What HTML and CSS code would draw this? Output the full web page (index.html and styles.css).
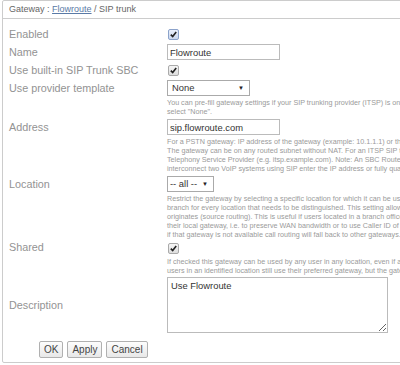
FILE: index.html
```html
<!DOCTYPE html>
<html>
<head>
    <title>Gateway - Flowroute</title>
    <link rel="stylesheet" href="styles.css">
</head>
<body>
    <div class="panel">
        <!-- Breadcrumb -->
        <div class="panel-head">Gateway : <a href="#">Flowroute</a> / SIP trunk</div>

        <form class="gw-form">
            <table class="fields">
                <tr class="row">
                    <td class="lbl">Enabled</td>
                    <td><span class="chk focused"><svg width="7" height="7" viewBox="0 0 7 7"><path d="M0.8 3.6 L2.7 5.6 L6.2 0.9" fill="none" stroke="#222" stroke-width="1.6"/></svg></span></td>
                </tr>
                <tr class="row">
                    <td class="lbl">Name</td>
                    <td><input type="text" class="txt" value="Flowroute"></td>
                </tr>
                <tr class="row">
                    <td class="lbl">Use built-in SIP Trunk SBC</td>
                    <td><span class="chk"><svg width="7" height="7" viewBox="0 0 7 7"><path d="M0.8 3.6 L2.7 5.6 L6.2 0.9" fill="none" stroke="#222" stroke-width="1.6"/></svg></span></td>
                </tr>
                <tr class="row">
                    <td class="lbl">Use provider template</td>
                    <td><div class="select sel-template"><span>None</span><span class="arrow">&#9660;</span></div></td>
                </tr>
                <tr>
                    <td></td>
                    <td class="help">You can pre-fill gateway settings if your SIP trunking provider (ITSP) is on the list, otherwise<br>select "None".</td>
                </tr>
                <tr class="row">
                    <td class="lbl">Address</td>
                    <td><input type="text" class="txt" value="sip.flowroute.com"></td>
                </tr>
                <tr>
                    <td></td>
                    <td class="help">For a PSTN gateway: IP address of the gateway (example: 10.1.1.1) or the hostname of the gateway.<br>The gateway can be on any routed subnet without NAT. For an ITSP SIP trunk: host name of the Internet<br>Telephony Service Provider (e.g. itsp.example.com). Note: An SBC Router is required. For a SIP trunk to<br>interconnect two VoIP systems using SIP enter the IP address or fully qualified host name of the other system.</td>
                </tr>
                <tr class="row">
                    <td class="lbl">Location</td>
                    <td><div class="select sel-location"><span>-- all --</span><span class="arrow">&#9660;</span></div></td>
                </tr>
                <tr>
                    <td></td>
                    <td class="help">Restrict the gateway by selecting a specific location for which it can be used. Define a location or<br>branch for every location that needs to be distinguished. This setting allows routing based on where a call<br>originates (source routing). This is useful if users located in a branch office are required to use<br>their local gateway, i.e. to preserve WAN bandwidth or to use Caller ID of that location. Please note that<br>if that gateway is not available call routing will fall back to other gateways.</td>
                </tr>
                <tr class="row row-short">
                    <td class="lbl">Shared</td>
                    <td><span class="chk"><svg width="7" height="7" viewBox="0 0 7 7"><path d="M0.8 3.6 L2.7 5.6 L6.2 0.9" fill="none" stroke="#222" stroke-width="1.6"/></svg></span></td>
                </tr>
                <tr>
                    <td></td>
                    <td class="help help-last">If checked this gateway can be used by any user in any location, even if a location is set. Note that<br>users in an identified location still use their preferred gateway, but the gateway is shared with others.</td>
                </tr>
                <tr>
                    <td class="lbl">Description</td>
                    <td><textarea class="desc">Use Flowroute</textarea></td>
                </tr>
            </table>

            <div class="buttons">
                <button type="button">OK</button>
                <button type="button">Apply</button>
                <button type="button">Cancel</button>
            </div>
        </form>
    </div>
</body>
</html>
```

FILE: styles.css
```css
body {
    margin: 0;
    padding: 0;
    height: 100vh;
    overflow: hidden;
    background: #fff;
    font-family: 'Liberation Sans', Arial, sans-serif;
}

/* Outer panel */
.panel {
    margin-left: 2px;
    width: 640px;
    height: 363px;
    border: 1px solid #ccc;
    border-radius: 2px;
    box-sizing: border-box;
}
.panel-head {
    height: 17px;
    line-height: 16px;
    padding-left: 6px;
    font-size: 9px;
    color: #666;
    border-bottom: 1px solid #ccc;
}
.panel-head a {
    color: #5a7aa6;
}

/* Form table */
.fields {
    border-collapse: collapse;
    margin-top: 6px;
    font-size: 10.8px;
    line-height: 12px;
}
.fields td {
    padding: 0;
    vertical-align: middle;
}
.fields .lbl {
    width: 158px;
    padding-left: 6px;
    color: #939393;
    white-space: nowrap;
}
.row td {
    height: 18px;
}
.row-short td {
    height: 12px;
}
.fields .help {
    padding: 1px 0 2px 0;
    font-size: 7.2px;
    line-height: 9px;
    color: #9a9a9a;
    white-space: nowrap;
}
.fields .help-last {
    padding-top: 3px;
}

/* Checkbox */
.chk {
    display: inline-flex;
    align-items: center;
    justify-content: center;
    width: 11px;
    height: 11px;
    margin-left: 1px;
    box-sizing: border-box;
    border: 1px solid #aaa;
    border-radius: 2px;
    background: linear-gradient(#f6f6f6, #dedede);
    vertical-align: middle;
}
.chk.focused {
    border-color: #8ca3cb;
    background: linear-gradient(#eaf0fb, #ccd8ee);
}

/* Inputs */
.txt {
    width: 113px;
    height: 16px;
    box-sizing: border-box;
    margin: 0;
    padding: 0 2px;
    border: 1px solid #bbb;
    font-family: 'Liberation Sans', Arial, sans-serif;
    font-size: 9.4px;
    color: #333;
    vertical-align: middle;
}
.select {
    display: flex;
    align-items: center;
    justify-content: space-between;
    height: 16px;
    box-sizing: border-box;
    padding: 0 5px 0 4px;
    border: 1px solid #aaa;
    font-size: 9.4px;
    color: #333;
    background: #fff;
}
.select .arrow {
    font-size: 6px;
    color: #222;
}
.sel-template {
    width: 83px;
}
.sel-location {
    width: 47px;
    padding-left: 2px;
}

.desc {
    display: block;
    width: 221px;
    height: 56px;
    box-sizing: border-box;
    margin: 0;
    padding: 2px 3px;
    border: 1px solid #bbb;
    font-family: 'Liberation Sans', Arial, sans-serif;
    font-size: 9.4px;
    color: #333;
}

/* Buttons */
.buttons {
    display: flex;
    gap: 4px;
    margin: 8px 0 0 36px;
}
.buttons button {
    height: 17px;
    padding: 0 4px;
    border: 1px solid #b0b0b0;
    border-radius: 2px;
    background: linear-gradient(#fdfdfd, #e8e8e8);
    font-family: 'Liberation Sans', Arial, sans-serif;
    font-size: 10px;
    color: #444;
}
```
